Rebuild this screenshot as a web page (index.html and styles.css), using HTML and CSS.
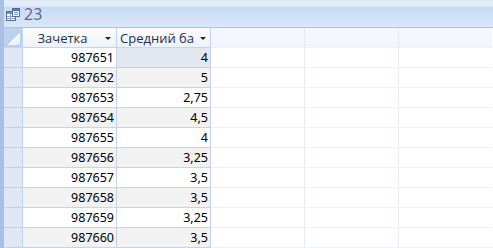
FILE: index.html
```html
<!DOCTYPE html>
<html lang="ru">
<head>
    <meta charset="UTF-8">
    <title>23</title>
    <link rel="stylesheet" href="styles.css">
</head>
<body>
    <div class="window">
        <div class="titlebar">
            <svg class="title-icon" width="14" height="13" viewBox="0 0 14 13">
                <rect x="0.5" y="3.5" width="9" height="9" fill="#fff" stroke="#5a6f8e"/>
                <rect x="1" y="4" width="8" height="2" fill="#6f8fc0"/>
                <line x1="1" y1="8.5" x2="9" y2="8.5" stroke="#8ea3c3"/>
                <line x1="1" y1="10.5" x2="9" y2="10.5" stroke="#8ea3c3"/>
                <line x1="4.5" y1="6" x2="4.5" y2="12" stroke="#8ea3c3"/>
                <rect x="6.5" y="0.5" width="7" height="8" fill="#fff" stroke="#5a6f8e"/>
                <rect x="7" y="1" width="6" height="2" fill="#3f78c8"/>
                <line x1="8" y1="4.5" x2="12" y2="4.5" stroke="#7a8cab"/>
                <line x1="8" y1="6.5" x2="12" y2="6.5" stroke="#7a8cab"/>
            </svg>
            <span class="title-text">23</span>
        </div>
        <div class="sheet">
            <div class="sel-head"></div>
            <div class="col-head">Зачетка<span class="arrow"></span></div>
            <div class="col-head clipped">Средний ба<span class="arrow"></span></div>
            <div class="empty-head"></div>
            <div class="empty-head"></div>
            <div class="empty-head last"></div>

            <div class="sel"></div><div class="cell">987651</div><div class="cell current">4</div><div class="blank"></div><div class="blank"></div><div class="blank last"></div>
            <div class="sel"></div><div class="cell alt">987652</div><div class="cell alt">5</div><div class="blank"></div><div class="blank"></div><div class="blank last"></div>
            <div class="sel"></div><div class="cell">987653</div><div class="cell">2,75</div><div class="blank"></div><div class="blank"></div><div class="blank last"></div>
            <div class="sel"></div><div class="cell alt">987654</div><div class="cell alt">4,5</div><div class="blank"></div><div class="blank"></div><div class="blank last"></div>
            <div class="sel"></div><div class="cell">987655</div><div class="cell">4</div><div class="blank"></div><div class="blank"></div><div class="blank last"></div>
            <div class="sel"></div><div class="cell alt">987656</div><div class="cell alt">3,25</div><div class="blank"></div><div class="blank"></div><div class="blank last"></div>
            <div class="sel"></div><div class="cell">987657</div><div class="cell">3,5</div><div class="blank"></div><div class="blank"></div><div class="blank last"></div>
            <div class="sel"></div><div class="cell alt">987658</div><div class="cell alt">3,5</div><div class="blank"></div><div class="blank"></div><div class="blank last"></div>
            <div class="sel"></div><div class="cell">987659</div><div class="cell">3,25</div><div class="blank"></div><div class="blank"></div><div class="blank last"></div>
            <div class="sel"></div><div class="cell alt">987660</div><div class="cell alt">3,5</div><div class="blank"></div><div class="blank"></div><div class="blank last"></div>
        </div>
    </div>
</body>
</html>
```

FILE: styles.css
```css
* {
    margin: 0;
    padding: 0;
    box-sizing: border-box;
}

body {
    width: 493px;
    height: 248px;
    overflow: hidden;
    background: #fff;
    font-family: "Noto Sans", "Liberation Sans", sans-serif;
}

.window {
    border-left: 4px solid #a7c0e4;
    height: 248px;
}

.titlebar {
    height: 28px;
    display: flex;
    align-items: center;
    gap: 4px;
    padding: 1px 0 0 2px;
    background: linear-gradient(to bottom, #e2ebf8 0, #e2ebf8 6px, #c8daf4 7px, #dae6f8 26px);
    border-bottom: 1px solid #a8c8e9;
}

.title-icon {
    display: block;
}

.title-text {
    font-size: 16px;
    color: #5b6c88;
    line-height: 1;
}

.sheet {
    display: grid;
    grid-template-columns: 19px 94px 94px 94px 94px 93px;
    grid-auto-rows: 20px;
}

.sel-head {
    background: #bcd1ee;
    border-right: 1px solid #c4d4ea;
    border-bottom: 1px solid #c4d4ea;
    position: relative;
}

.sel-head::after {
    content: "";
    position: absolute;
    right: 2px;
    bottom: 2px;
    width: 12px;
    height: 12px;
    background: linear-gradient(to bottom right, transparent 50%, #fbfdff 50%, #d9e5f6 100%);
}

.col-head {
    display: flex;
    align-items: center;
    justify-content: center;
    position: relative;
    overflow: hidden;
    white-space: nowrap;
    font-family: "Open Sans", "Noto Sans", sans-serif;
    font-size: 13px;
    color: #1f2f47;
    background: linear-gradient(to bottom, #fbfcfe, #eef2f9);
    border-right: 1px solid #c5d5ea;
    border-bottom: 1px solid #c5d5ea;
    padding-right: 14px;
}

.col-head.clipped {
    justify-content: flex-start;
    padding-left: 3px;
}

.col-head .arrow {
    position: absolute;
    right: 5px;
    top: 9px;
    border-left: 3px solid transparent;
    border-right: 3px solid transparent;
    border-top: 3px solid #222;
}

.col-head.clipped .arrow {
    right: 4px;
}

.empty-head {
    background: #f4f6fd;
    border-right: 1px solid #e6e9f2;
    border-bottom: 1px solid #eef0f6;
}

.sel {
    background: #dfe7f4;
    border-right: 1px solid #c3d1e7;
    border-bottom: 1px solid #c3d1e7;
}

.cell {
    display: flex;
    align-items: center;
    justify-content: flex-end;
    padding-right: 2px;
    font-size: 12.5px;
    color: #000;
    background: #fff;
    border-right: 1px solid #c5d2e6;
    border-bottom: 1px solid #c8d4e6;
}

.cell.alt {
    background: #f2f2f2;
}

.cell.current {
    background: #e3e7f0;
}

.blank {
    background: #fff;
    border-right: 1px solid #e8ebf3;
    border-bottom: 1px solid #eef0f6;
}

.last {
    border-right: none;
}
```
